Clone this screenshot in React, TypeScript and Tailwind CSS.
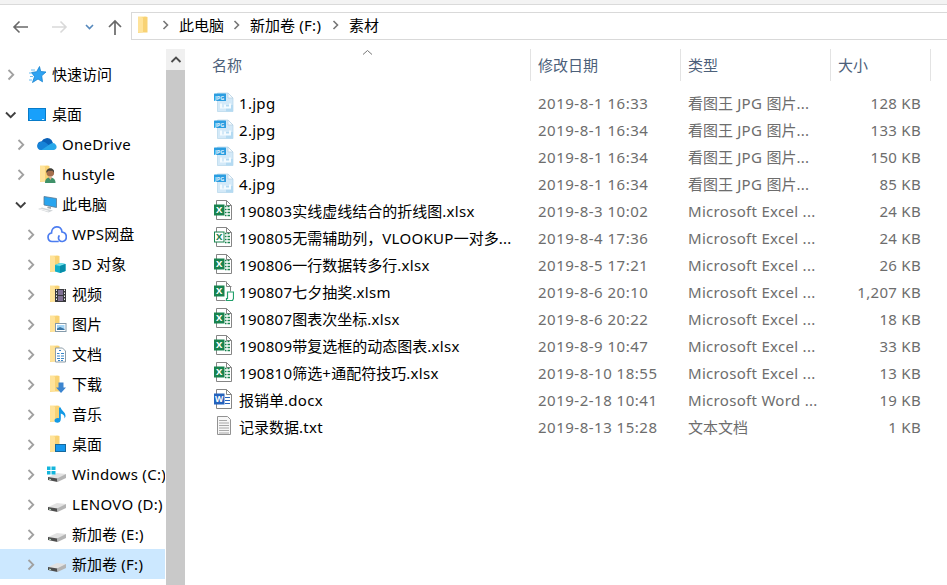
import type { ReactNode } from "react";

type IconProps = { children: ReactNode };

function Icon({ children }: IconProps) {
  return (
    <svg width="20" height="20" viewBox="0 0 20 20" className="block shrink-0">
      {children}
    </svg>
  );
}

// Latin runs are set slightly wider than the ideographs around them
function Label({ text }: { text: string }) {
  const runs = text.split(/([\u3000-\u9fff\uff00-\uffef]+)/).filter(Boolean);

  return (
    <>
      {runs.map((run, i) =>
        /[\u3000-\u9fff\uff00-\uffef]/.test(run) ? (
          <span key={i}>{run}</span>
        ) : (
          <span key={i} className="tracking-[0.3px]">
            {run}
          </span>
        )
      )}
    </>
  );
}

function Folder() {
  return (
    <>
      <path d="M3 1.5h7v15L3 18z" fill="#ffe59b" />
      <path d="M6 3l4.500-1.500 2 .5v15.500H3z" fill="#f8d274" />
      <path d="M3 2l5 1v14.500L3 17z" fill="#ffe39a" />
    </>
  );
}

function Drive({ windows = false }: { windows?: boolean }) {
  return (
    <Icon>
      <path d="M1 13L10 9l9 1-8.500 5z" fill="#e2e2e2" />
      <path d="M1 13l9.500 1.500V18L1 16z" fill="#4d4d4d" />
      <path d="M10 14.500l9-4.500v4l-8.500 4z" fill="#b4b4b4" />
      <path d="M2 15.200l2 .3" stroke="#b9dcc0" />
      {windows && (
        <g fill="#14b5dc">
          <rect width="3.500" height="3.500" y="2.500" />
          <rect width="4" height="3.500" x="4.500" y="2.500" />
          <rect width="3.500" height="3.500" y="7" />
          <rect width="4" height="3.500" x="4.500" y="7" />
        </g>
      )}
    </Icon>
  );
}

const icons: Record<string, ReactNode> = {
  star: (
    <Icon>
      <path
        d="M12.500 2.500l1.200 5 5.300.5-4.300 3.800.8 6-4.500-2.800-5.500 3.500 2-6L4.500 8.500l5.200-.8z"
        fill="#2ea3f2"
        stroke="#1683d0"
        strokeWidth=".8"
      />
      <path d="M4 6h4M2 9h3M3 12.500h3M2 16h3" stroke="#6bbcf0" />
    </Icon>
  ),
  desktop: (
    <Icon>
      <rect x="1.500" y="4.500" width="17" height="12" fill="#18a0fb" stroke="#087bc8" />
      <path d="M3 15.500h1.500M15 15.500h2" stroke="#d5efff" />
    </Icon>
  ),
  onedrive: (
    <Icon>
      <path d="M4.500 15.500a4 4 0 010-8 6.200 6.200 0 0110-1.500l1.500 3-6 6z" fill="#0a61b8" />
      <path d="M4.500 16a3.800 3.800 0 01-3.500-6c2-3 5-3 7.500-1.500l5 4-3 3.500z" fill="#1683d8" />
      <path d="M4.500 16L14 9.500a3.700 3.700 0 015 1.500c1.500 2.500 0 5-2.500 5z" fill="#28a8ea" />
    </Icon>
  ),
  user: (
    <Icon>
      <Folder />
      <path d="M8 19c0-4 2-5.500 5-5.500s5.500 1.500 5.500 5.500z" fill="#3f9169" />
      <path d="M11 12.500l2.500 3.500 2-3.500z" fill="#e1b28f" />
      <circle cx="13.300" cy="8.700" r="3.800" fill="#a66f4d" />
      <path d="M9.300 8.700c-.5-6 8.700-6 7.700 0l-1.500-2h-4z" fill="#3f3e37" />
    </Icon>
  ),
  computer: (
    <Icon>
      <path d="M7 2.500l12.500 2v9L7 11z" fill="#29a5ef" stroke="#5b7890" strokeWidth=".8" />
      <path d="M11 12.500l3 .5v2l-4-1z" fill="#a2aaaf" />
      <path d="M1 15l4-1.500 11 3-4.500 2z" fill="#d1d5d8" />
      <path d="M3 15l8.500 2.200" stroke="#f7f7f7" />
    </Icon>
  ),
  cloud: (
    <Icon>
      <path
        d="M11 17.500H5A4.300 4.300 0 014.500 9C4.500 1 14.500.8 15 8c5.800.8 5.500 9 .5 9.500-2.800.2-5-2.500-3.500-5.500"
        fill="none"
        stroke="#4c7df0"
        strokeWidth="1.700"
        strokeLinecap="round"
      />
    </Icon>
  ),
  cube: (
    <Icon>
      <Folder />
      <path d="M8 11l5-2 5.500 1v7L13 19l-5-1.500z" fill="#10aec8" />
      <path d="M8 11l5-2 5.500 1-5.500 2z" fill="#73e0ea" />
      <path d="M13 12l5.500-2v7L13 19z" fill="#078da9" />
    </Icon>
  ),
  video: (
    <Icon>
      <Folder />
      <rect x="8" y="5" width="11" height="13" fill="#38383c" />
      <path d="M11 6h5v5h-5zM11 12h5v5h-5z" fill="#807195" />
      <path d="M9.500 5.500v12M17.500 5.500v12" stroke="#eee" strokeDasharray="1.500 1.500" />
    </Icon>
  ),
  picture: (
    <Icon>
      <Folder />
      <rect x="8.500" y="9.500" width="10.500" height="8" fill="#fff" stroke="#849aaa" />
      <rect x="10" y="11" width="7.500" height="5" fill="#a3d5f7" />
      <path d="M10 14.500l3-1.500 4.500 2v1H10z" fill="#3a75a5" />
    </Icon>
  ),
  document: (
    <Icon>
      <Folder />
      <path d="M8.500 4h7l3 3v11h-10z" fill="#fff" stroke="#8c9da8" />
      <path d="M12 6.500h2m-4 3h2.500m1.500 0h3m-7 2.500h3m1 0h3m-7 2.500h3m1 0h3M11 16.500h2m1 0h2" stroke="#3986c7" />
    </Icon>
  ),
  download: (
    <Icon>
      <Folder />
      <path d="M11.500 8.500h5v5H19l-5 5.500-5-5.500h2.500z" fill="#3c85d0" />
    </Icon>
  ),
  music: (
    <Icon>
      <Folder />
      <path
        d="M12 3.500h1.800c0 3 5.200 4.500 4.700 9l-1 2c.2-3-1-4-3.700-5V15c0 5-6.300 4.500-6.300 1.500 0-2 2.500-3 4.500-2.300z"
        fill="#1399e5"
      />
    </Icon>
  ),
  desktopFolder: (
    <Icon>
      <Folder />
      <rect x="8.500" y="10.500" width="10" height="7" fill="#1698ee" stroke="#16699d" />
    </Icon>
  ),
  windowsDrive: <Drive windows />,
  drive: <Drive />,
};

function JpgIcon() {
  return (
    <Icon>
      <path d="M3.500 1H14l5 5v13.500H3.500z" fill="#d3e9f8" stroke="#b5d5ea" strokeWidth=".7" />
      <path d="M12 13h7v6.500h-7z" fill="#b4daf2" />
      <path d="M14 1v5h5z" fill="#f7fbfe" stroke="#b5d0e2" strokeWidth=".7" />
      <path d="M6 11.500h2v4h2v-3h2v2h3v-3h2v5H6z" fill="#f4fbff" />
      <rect y="1.500" width="12" height="7.500" rx=".5" fill="#2b9de0" />
      <text x="1" y="7.500" fontSize="5.500" fontWeight="700" fill="#dff3ff">
        JPG
      </text>
    </Icon>
  );
}

function OfficeIcon({ kind }: { kind: "xlsx" | "xlsm" | "docx" | "linked" }) {
  const word = kind === "docx";
  const color = word ? "#2463bd" : "#18834e";

  return (
    <Icon>
      {kind === "xlsm" ? (
        <path d="M2.500.5h9l5 5v5M2.500.5v19h9" fill="none" stroke="#858585" />
      ) : (
        <path d="M2.500.5h10l5 5v14h-15z" fill="#fff" stroke="#858585" />
      )}
      <path d="M12.500.5v5h5" fill="none" stroke="#858585" />
      {word && <path d="M11 8.500h5M11 11.500h5M11 14.500h5" stroke={color} />}
      {(kind === "xlsx" || kind === "linked") && (
        <path
          d="M11 6.500h1.500m1 0h2M11 9.500h1.500m1 0h2.500M11 12.500h1.500m1 0h2.500M11 15.500h1.500m1 0h2.500"
          stroke={color}
          strokeWidth="1.300"
        />
      )}
      <rect x=".5" y="5" width="9.500" height="10" fill={kind === "linked" ? "#fff" : color} stroke={color} />
      <text
        x="5.200"
        y="13.200"
        textAnchor="middle"
        fontSize={word ? "8.500" : "9.500"}
        fontWeight="700"
        fill={kind === "linked" ? color : "#fff"}
      >
        {word ? "W" : "X"}
      </text>
      {kind === "xlsm" && (
        <path d="M13.500 11h6v6.500l-1 2h-6v-2h1z" fill="#fff" stroke="#22a06b" strokeWidth="1.200" />
      )}
    </Icon>
  );
}

function TextIcon() {
  return (
    <Icon>
      <path d="M3.500.5h10l3 3v15h-13z" fill="#f7f7f7" stroke="#929292" />
      <path d="M5 4.500h8M5 7h10M5 9.500h10M5 12h10M5 14.500h10M5 17h10" stroke="#a8a8a8" />
    </Icon>
  );
}

function Chevron({ open = false }: { open?: boolean }) {
  return (
    <svg width="22" height="20" viewBox="0 0 22 20" fill="none" className="shrink-0">
      {open ? (
        <path d="M6 8.500l4.700 4.700 4.700-4.700" stroke="#404040" strokeWidth="1.900" />
      ) : (
        <path d="M8.500 6l4.700 4.700L8.500 15.500" stroke="#a1a1a1" strokeWidth="1.900" />
      )}
    </svg>
  );
}

type TreeItem = { label: string; icon: string; level: number; open?: boolean; active?: boolean };

const tree: TreeItem[] = [
  { label: "桌面", icon: "desktop", level: 0, open: true },
  { label: "OneDrive", icon: "onedrive", level: 1 },
  { label: "hustyle", icon: "user", level: 1 },
  { label: "此电脑", icon: "computer", level: 1, open: true },
  { label: "WPS网盘", icon: "cloud", level: 2 },
  { label: "3D 对象", icon: "cube", level: 2 },
  { label: "视频", icon: "video", level: 2 },
  { label: "图片", icon: "picture", level: 2 },
  { label: "文档", icon: "document", level: 2 },
  { label: "下载", icon: "download", level: 2 },
  { label: "音乐", icon: "music", level: 2 },
  { label: "桌面", icon: "desktopFolder", level: 2 },
  { label: "Windows (C:)", icon: "windowsDrive", level: 2 },
  { label: "LENOVO (D:)", icon: "drive", level: 2 },
  { label: "新加卷 (E:)", icon: "drive", level: 2 },
  { label: "新加卷 (F:)", icon: "drive", level: 2, active: true },
];

const indent = ["pl-0", "pl-[10px]", "pl-[20px]"];

function TreeRow({ label, icon, level, open, active }: TreeItem) {
  return (
    <div
      className={`flex h-[30px] w-[165px] items-center overflow-hidden whitespace-nowrap ${indent[level]} ${
        active ? "bg-[#cce8ff]" : ""
      }`}
    >
      <Chevron open={open} />
      <span className="ml-[5px]">{icons[icon]}</span>
      <span className="ml-[5px]">
        <Label text={label} />
      </span>
    </div>
  );
}

const jpg = "看图王 JPG 图片...";
const excel = "Microsoft Excel ...";

const files = [
  { name: "1.jpg", date: "2019-8-1 16:33", type: jpg, size: "128 KB", icon: <JpgIcon /> },
  { name: "2.jpg", date: "2019-8-1 16:34", type: jpg, size: "133 KB", icon: <JpgIcon /> },
  { name: "3.jpg", date: "2019-8-1 16:34", type: jpg, size: "150 KB", icon: <JpgIcon /> },
  { name: "4.jpg", date: "2019-8-1 16:34", type: jpg, size: "85 KB", icon: <JpgIcon /> },
  { name: "190803实线虚线结合的折线图.xlsx", date: "2019-8-3 10:02", type: excel, size: "24 KB", icon: <OfficeIcon kind="xlsx" /> },
  { name: "190805无需辅助列，VLOOKUP一对多...", date: "2019-8-4 17:36", type: excel, size: "24 KB", icon: <OfficeIcon kind="linked" /> },
  { name: "190806一行数据转多行.xlsx", date: "2019-8-5 17:21", type: excel, size: "26 KB", icon: <OfficeIcon kind="xlsx" /> },
  { name: "190807七夕抽奖.xlsm", date: "2019-8-6 20:10", type: excel, size: "1,207 KB", icon: <OfficeIcon kind="xlsm" /> },
  { name: "190807图表次坐标.xlsx", date: "2019-8-6 20:22", type: excel, size: "18 KB", icon: <OfficeIcon kind="xlsx" /> },
  { name: "190809带复选框的动态图表.xlsx", date: "2019-8-9 10:47", type: excel, size: "33 KB", icon: <OfficeIcon kind="xlsx" /> },
  { name: "190810筛选+通配符技巧.xlsx", date: "2019-8-10 18:55", type: excel, size: "13 KB", icon: <OfficeIcon kind="xlsx" /> },
  { name: "报销单.docx", date: "2019-2-18 10:41", type: "Microsoft Word ...", size: "19 KB", icon: <OfficeIcon kind="docx" /> },
  { name: "记录数据.txt", date: "2019-8-13 15:28", type: "文本文档", size: "1 KB", icon: <TextIcon /> },
];

function Crumb() {
  return (
    <svg width="8" height="12" viewBox="0 0 8 12" fill="none" className="shrink-0">
      <path d="M1.500 2l4 4-4 4" stroke="#767676" strokeWidth="1.600" />
    </svg>
  );
}

function AddressBar() {
  return (
    <div className="flex h-[44px] items-start pt-[7px]">
      <svg width="131" height="28" viewBox="0 0 131 28" fill="none" className="shrink-0">
        <path d="M28 15H14M19.500 9.500L14 15l5.500 5.500" stroke="#696969" strokeWidth="1.600" />
        <path d="M52 15h14M60.500 9.500L66 15l-5.500 5.500" stroke="#d9d9d9" strokeWidth="1.600" />
        <path d="M86 13l3.500 3.500L93 13" stroke="#5689bd" strokeWidth="1.600" />
        <path d="M115 23V9M109 15l6-6 6 6" stroke="#696969" strokeWidth="1.700" />
      </svg>
      <div className="flex h-[28px] flex-1 items-center border-y border-l border-[#d9d9d9] pb-[2px] pl-[3px]">
        <Icon>
          <Folder />
        </Icon>
        <span className="ml-[7px]"><Crumb /></span>
        <span className="ml-[9px] w-[54px]">此电脑</span>
        <Crumb />
        <span className="ml-[9px] w-[82px]"><Label text="新加卷 (F:)" /></span>
        <Crumb />
        <span className="ml-[9px]">素材</span>
      </div>
    </div>
  );
}

export default function App() {
  return (
    <main className="flex h-[585px] w-[947px] flex-col overflow-hidden bg-white font-['Noto_Sans','Noto_Sans_CJK_SC',sans-serif] text-[15px] leading-[20px] text-black">
      <div className="h-[5px] shrink-0 border-b border-[#dadada] bg-[#f3f3f3]" />
      <AddressBar />

      <div className="flex min-h-0 flex-1">
        <nav className="w-[166px] shrink-0 overflow-hidden pt-[10px]">
          <TreeRow label="快速访问" icon="star" level={0} />
          <div className="h-[10px]" />
          {tree.map((item, i) => (
            <TreeRow key={i} {...item} />
          ))}
        </nav>

        <div className="w-[19px] shrink-0 bg-[#c9c9c9]">
          <div className="flex h-[21px] items-center justify-center bg-[#f0f0f0]">
            <svg width="12" height="10" viewBox="0 0 12 10" fill="none">
              <path d="M1.500 7L6 2.500 10.500 7" stroke="#4c4c4c" strokeWidth="1.900" />
            </svg>
          </div>
        </div>

        <section className="flex-1 pl-[19px]">
          <div className="flex h-[32px] text-[#4c607a]">
            <div className="relative w-[327px] border-r border-[#e3e3e3] pt-[6px] pl-[8px]">
              名称
              <svg width="11" height="7" viewBox="0 0 11 7" fill="none" className="absolute top-0 left-[158px]">
                <path d="M1 5.500l4.500-4 4.500 4" stroke="#777" />
              </svg>
            </div>
            <div className="w-[150px] border-r border-[#e3e3e3] pt-[6px] pl-[7px]">修改日期</div>
            <div className="w-[150px] border-r border-[#e3e3e3] pt-[6px] pl-[7px]">类型</div>
            <div className="w-[100px] border-r border-[#e3e3e3] pt-[6px] pl-[7px]">大小</div>
          </div>

          <div className="pt-[9px]">
            {files.map((file) => (
              <div key={file.name} className="flex h-[27px] pt-[3px] whitespace-nowrap text-[#6d6d6d]">
                <div className="-mt-px ml-[10px] w-[25px]">{file.icon}</div>
                <div className="w-[299px] text-black"><Label text={file.name} /></div>
                <div className="w-[150px] tracking-[0.5px]">{file.date}</div>
                <div className="w-[150px]"><Label text={file.type} /></div>
                <div className="w-[83px] text-right"><Label text={file.size} /></div>
              </div>
            ))}
          </div>
        </section>
      </div>
    </main>
  );
}
